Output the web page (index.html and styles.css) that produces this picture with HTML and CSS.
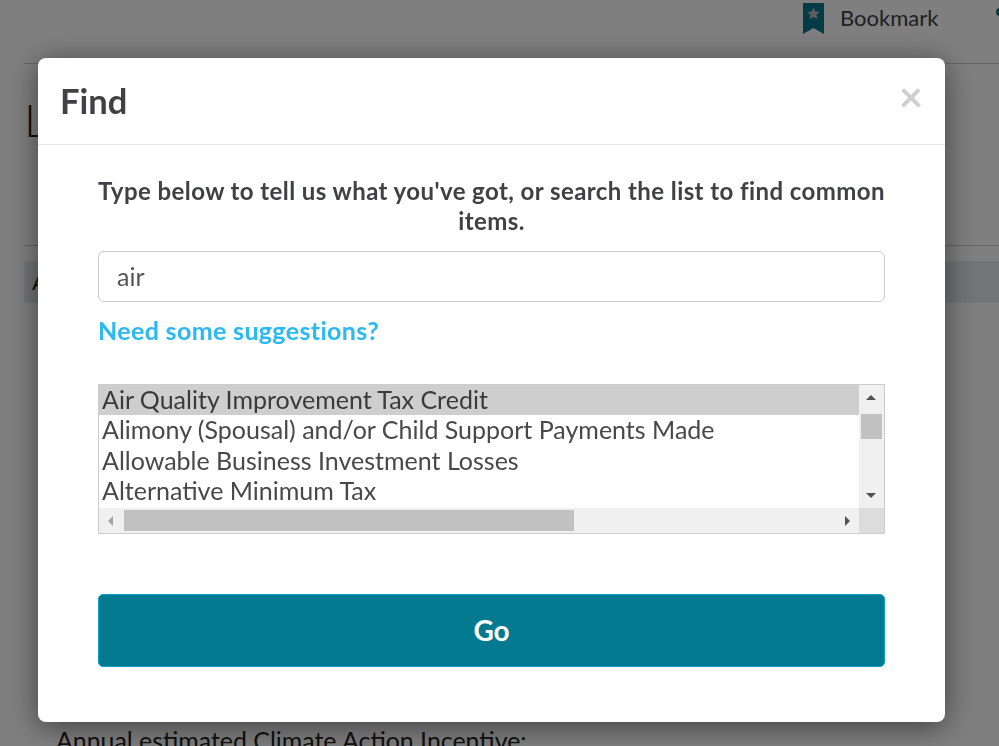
FILE: index.html
```html
<!DOCTYPE html>
<html lang="en">
<head>
<meta charset="utf-8">
<title>Find</title>
<link rel="stylesheet" href="styles.css">
</head>
<body>
<div class="page">
  <div class="topbar">
    <svg class="bookmark-icon" width="21" height="31" viewBox="0 0 21 31"><path d="M0 0H21V31L10.500 25 0 31Z" fill="#03798f"/><path d="M10.500 4.500l1.900 3.900 4.300.5-3.200 2.900.9 4.300-3.900-2.200-3.900 2.200.9-4.300-3.200-2.900 4.300-.5Z" fill="#bdbdbd"/></svg>
    <span class="bookmark-label">Bookmark</span>
    <span class="dot"></span>
  </div>
  <div class="title-row"><h1 class="page-title">Life</h1></div>
  <div class="band">A</div>
  <p class="estimate">Annual estimated Climate Action Incentive:</p>
</div>
<div class="overlay"></div>
<div class="modal">
  <div class="modal-header">
    <h2 class="modal-title">Find</h2>
    <span class="close">×</span>
  </div>
  <div class="modal-body">
    <p class="prompt">Type below to tell us what you've got, or search the list to find common items.</p>
    <div class="search">air</div>
    <a class="suggest">Need some suggestions?</a>
    <div class="listbox">
      <div class="list-main">
        <div class="options">
          <div class="option selected">Air Quality Improvement Tax Credit</div>
          <div class="option">Alimony (Spousal) and/or Child Support Payments Made</div>
          <div class="option">Allowable Business Investment Losses</div>
          <div class="option">Alternative Minimum Tax</div>
        </div>
        <div class="vscroll">
          <span class="arrow arrow-up"></span>
          <span class="vthumb"></span>
          <span class="arrow arrow-down"></span>
        </div>
      </div>
      <div class="list-bottom">
        <div class="hscroll">
          <span class="arrow arrow-left"></span>
          <span class="hthumb"></span>
          <span class="arrow arrow-right"></span>
        </div>
        <div class="corner"></div>
      </div>
    </div>
    <button class="go">Go</button>
  </div>
</div>
</body>
</html>
```
FILE: styles.css
```css
* { box-sizing: border-box; }
html, body { margin: 0; height: 100%; overflow: hidden; }
body { font-family: Lato, "Liberation Sans", sans-serif; color: #3f4145; background: #fff; position: relative; }
.page { padding: 0 0 0 24px; height: 746px; display: flex; flex-direction: column; }
.topbar { height: 64px; border-bottom: 1px solid #ccc; display: flex; align-items: flex-start; padding: 3px 0 0 779px; position: relative; }
.bookmark-icon { flex: none; }
.bookmark-label { font-size: 22px; margin: 2px 0 0 16px; line-height: 26px; flex: none; }
.dot { width: 8px; height: 8px; background: #03798f; border-radius: 50%; margin: 5px 0 0 58px; flex: none; }
.title-row { height: 182px; border-bottom: 1px solid #ccc; }
.page-title { margin: 26px 0 0; font-size: 46px; font-weight: 300; line-height: 60px; color: #222; }
.band { height: 42px; margin-top: 15px; background: #e6e9eb; font-size: 22px; line-height: 42px; padding-left: 8px; color: #222; }
.estimate { margin: auto 0 0 32px; font-size: 24.900px; line-height: 20px; height: 16px; color: #222; }
.overlay { position: fixed; inset: 0; background: rgba(0,0,0,.5); }
.modal { position: fixed; left: 38px; top: 58px; width: 907px; height: 664px; background: #fff; border-radius: 8px; box-shadow: 0 5px 30px rgba(0,0,0,.5); display: flex; flex-direction: column; }
.modal-header { height: 87px; border-bottom: 1px solid #e5e5e5; padding: 0 22px; display: flex; justify-content: space-between; }
.modal-title { margin: 23px 0 0; font-size: 34.500px; font-weight: 700; line-height: 40px; color: #3f4145; }
.close { font-size: 42px; font-weight: 700; line-height: 42px; color: #cfcfcf; margin-top: 17px; }
.modal-body { padding: 31px 60px 0; display: flex; flex-direction: column; }
.prompt { margin: 0; font-size: 24px; letter-spacing: .42px; font-weight: 700; line-height: 30px; text-align: center; color: #3f4145; }
.search { margin-top: 15px; height: 51px; border: 1px solid #ccc; border-radius: 6px; padding: 0 18px; font-size: 25px; line-height: 49px; color: #555; }
.suggest { margin-top: 13px; font-size: 25px; letter-spacing: .35px; font-weight: 700; line-height: 30px; color: #2bb9f5; }
.listbox { margin-top: 39px; height: 150px; border: 1px solid #ccc; display: flex; flex-direction: column; }
.list-main { flex: 1; display: flex; min-height: 0; }
.options { flex: 1; overflow: hidden; }
.option { height: 30.400px; font-size: 25px; line-height: 28px; padding-left: 3px; white-space: nowrap; color: #484848; }
.option.selected { background: #cecece; color: #3a3a3a; }
.vscroll { width: 25px; background: #f0f0f0; display: flex; flex-direction: column; align-items: center; padding: 0 1px 0 0; }
.vthumb { width: 21px; height: 25px; background: #c1c1c1; margin-top: 13.500px; }
.arrow { width: 0; height: 0; border: 5.500px solid transparent; display: block; }
.arrow-up { border-bottom-color: #505050; border-top-width: 0; margin-top: 10px; }
.arrow-down { border-top-color: #505050; border-bottom-width: 0; margin-top: auto; margin-bottom: 10px; }
.list-bottom { height: 25px; display: flex; }
.hscroll { flex: 1; background: #f0f0f0; display: flex; align-items: center; padding: 0 9px; }
.hthumb { width: 450px; height: 21px; background: #c1c1c1; margin-left: 10.500px; }
.arrow-left { border-right-color: #a3a3a3; border-left-width: 0; }
.arrow-right { border-left-color: #505050; border-right-width: 0; margin-left: auto; }
.corner { width: 25px; background: #dcdcdc; }
.go { margin-top: 60px; height: 73px; padding: 0 0 2px; background: #047a90; border: 1px solid #0a9fd0; border-radius: 5px; color: #fff; font: 700 28px Lato, "Liberation Sans", sans-serif; }
```
